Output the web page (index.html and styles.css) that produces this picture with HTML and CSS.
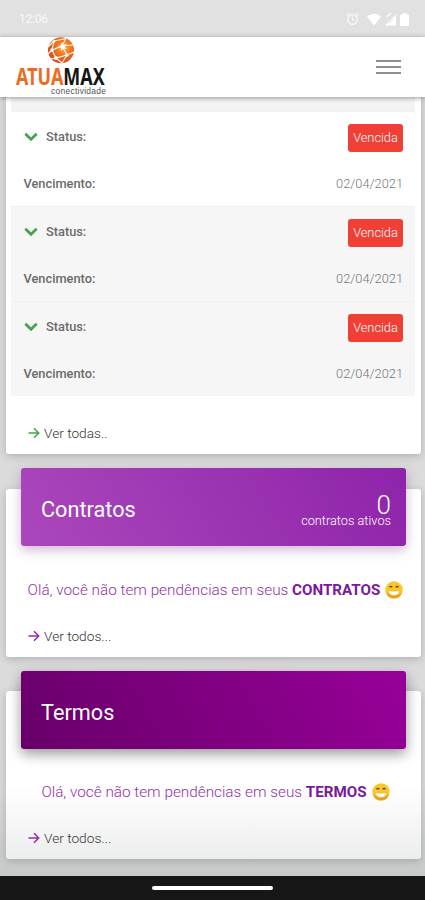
FILE: index.html
```html
<!DOCTYPE html>
<html lang="pt-BR">
<head>
  <meta charset="UTF-8">
  <meta name="viewport" content="width=device-width, initial-scale=1">
  <title>Atuamax</title>
  <link rel="stylesheet" href="styles.css">
</head>
<body>

<!-- shared icons -->
<svg class="sprite" width="0" height="0">
  <symbol id="chevron" viewBox="0 0 14 10">
    <path d="M1.3 1.8 L7 7.300 L12.7 1.8" fill="none" stroke="currentColor" stroke-width="2.8"/>
  </symbol>
  <symbol id="arrow" viewBox="0 0 12 12">
    <path d="M0.5 6 H10.5 M6 1.3 L10.7 6 L6 10.7" fill="none" stroke="currentColor" stroke-width="1.5"/>
  </symbol>
  <symbol id="grin" viewBox="0 0 18 18">
    <circle cx="9" cy="9" r="8.7" fill="#fbc62c"/>
    <path d="M1 12 a8.7 8.7 0 0 0 16 0 Q9 16.500 1 12z" fill="#eea01d"/>
    <path d="M4.500 6.300 Q5.900 4.600 7.300 6.300 M10.700 6.300 Q12.100 4.600 13.500 6.300" fill="none" stroke="#60451b" stroke-width="1.300"/>
    <path d="M3.500 9.500 Q9 11 14.500 9.500 Q14 14.500 9 14.500 Q4 14.500 3.500 9.500z" fill="#fffdf0" stroke="#e0a92c" stroke-width=".5"/>
  </symbol>
</svg>

<div class="statusbar">
  <span class="clock">12:06</span>
  <div class="status-icons">
    <svg width="13" height="14" viewBox="0 0 13 14">
      <circle cx="6.500" cy="7.500" r="4.800" fill="none" stroke="#f6f6f6" stroke-width="1.400"/>
      <path d="M0.500 3.500 L3.500 1 M12.500 3.500 L9.500 1 M6.500 4.500 V7.800 L8.800 9" fill="none" stroke="#f6f6f6" stroke-width="1.200"/>
    </svg>
    <svg class="wifi" width="14" height="13" viewBox="0 0 14 13">
      <path d="M0 3.500 Q7 -2 14 3.500 L7 12.500z" fill="#fff"/>
    </svg>
    <svg class="signal" width="12" height="14" viewBox="0 0 12 14">
      <path d="M0 13.500 L11 2.500 V13.500z" fill="#fff"/>
      <path d="M1.500 5 L6 1" stroke="#f4f4f4" stroke-width="2"/>
      <path d="M4 11.500 L8 7.500" stroke="#e1e1e1" stroke-width="1"/>
    </svg>
    <svg class="battery" width="9" height="13" viewBox="0 0 9 13">
      <path d="M2.500 0 H6.500 V1.500 H8 Q9 1.500 9 2.500 V12 Q9 13 8 13 H1 Q0 13 0 12 V2.500 Q0 1.500 1 1.500 H2.500z" fill="#fff"/>
    </svg>
  </div>
</div>

<header class="navbar">
  <div class="logo">
    <svg class="globe" width="28" height="27" viewBox="0 0 28 27">
      <defs>
        <radialGradient id="globe" cx=".6" cy=".4" r=".65">
          <stop offset="0" stop-color="#ffb23c"/>
          <stop offset=".45" stop-color="#f4731c"/>
          <stop offset="1" stop-color="#d9441b"/>
        </radialGradient>
      </defs>
      <circle cx="14" cy="13.300" r="13" fill="url(#globe)"/>
      <path d="M1 10 L7 4 L19 1.500 M7 4 L5 13 L15 9 L19 1.500 M5 13 L1 17 M5 13 L9 21 L20 18 L15 9 L26 8 M20 18 L27 15 M9 21 L15 26 L20 18 M9 21 L4 22" fill="none" stroke="#fff" stroke-width="1.100"/>
      <g fill="#fff">
        <path d="M15 5 L16.200 8 L20 6.500 L17.500 9.500 L20 12 L16.200 11.200 L14 14 L13.700 10.600 L10 10.500 L13.500 8.500z"/>
        <circle cx="5" cy="13" r="1.700"/>
        <circle cx="9" cy="21" r="1.900"/>
        <circle cx="20" cy="18" r="1.700"/>
        <circle cx="7" cy="4.500" r="1.300"/>
      </g>
    </svg>
    <div class="logo-name"><span>ATUA</span>MAX</div>
    <div class="logo-sub">conectividade</div>
  </div>
  <div class="menu">
    <span></span>
    <span></span>
    <span></span>
  </div>
</header>

<main>
  <section class="card invoices">
    <div class="row-end"></div>
    <div class="invoice">
      <div class="line">
        <div class="label"><svg class="chevron"><use href="#chevron"/></svg>Status:</div>
        <span class="badge">Vencida</span>
      </div>
      <div class="line">
        <div class="label">Vencimento:</div>
        <span class="date">02/04/2021</span>
      </div>
    </div>
    <div class="invoice shaded">
      <div class="line">
        <div class="label"><svg class="chevron"><use href="#chevron"/></svg>Status:</div>
        <span class="badge">Vencida</span>
      </div>
      <div class="line">
        <div class="label">Vencimento:</div>
        <span class="date">02/04/2021</span>
      </div>
    </div>
    <div class="invoice shaded">
      <div class="line">
        <div class="label"><svg class="chevron"><use href="#chevron"/></svg>Status:</div>
        <span class="badge">Vencida</span>
      </div>
      <div class="line">
        <div class="label">Vencimento:</div>
        <span class="date">02/04/2021</span>
      </div>
    </div>
    <div class="more green"><svg class="arrow"><use href="#arrow"/></svg>Ver todas..</div>
  </section>

  <section class="card">
    <div class="card-header contratos">
      <h2>Contratos</h2>
      <div class="total">
        <div class="number">0</div>
        <div class="caption">contratos ativos</div>
      </div>
    </div>
    <p class="message">Olá, você não tem pendências em seus <b>CONTRATOS</b><svg class="grin"><use href="#grin"/></svg></p>
    <div class="more"><svg class="arrow"><use href="#arrow"/></svg>Ver todos...</div>
  </section>

  <section class="card">
    <div class="card-header termos">
      <h2>Termos</h2>
    </div>
    <p class="message">Olá, você não tem pendências em seus <b>TERMOS</b><svg class="grin"><use href="#grin"/></svg></p>
    <div class="more"><svg class="arrow"><use href="#arrow"/></svg>Ver todos...</div>
  </section>
  <div class="fade"></div>
</main>

<div class="gesture-bar"><span></span></div>

</body>
</html>
```
FILE: styles.css
```css
* {
  box-sizing: border-box;
}
body {
  margin: 0;
  height: 900px;
  display: flex;
  flex-direction: column;
  overflow: hidden;
  font-family: Roboto, sans-serif;
  font-weight: 300;
  background: #dadbda;
}
svg {
  flex-shrink: 0;
}
.sprite {
  display: none;
}

/* system bar */
.statusbar {
  height: 37px;
  flex-shrink: 0;
  display: flex;
  align-items: center;
  justify-content: space-between;
  padding: 1px 16px 0 19px;
  background: #e1e1e1;
}
.clock {
  color: #f8f8f8;
  font-size: 12px;
  font-weight: 400;
  letter-spacing: -0.2px;
}
.status-icons {
  display: flex;
  align-items: center;
}
.wifi {
  margin-left: 8px;
}
.signal {
  margin-left: 4px;
}
.battery {
  margin-left: 3px;
}

/* navbar */
.navbar {
  position: relative;
  z-index: 2;
  height: 60px;
  flex-shrink: 0;
  display: flex;
  align-items: center;
  justify-content: space-between;
  padding: 0 24px 0 16px;
  background: #fff;
  box-shadow: 0 1px 5px rgba(0, 0, 0, 0.4);
}
.logo {
  width: 91px;
  height: 60px;
}
.globe {
  display: block;
  margin-left: 31px;
}
.logo-name {
  width: max-content;
  margin-top: 1px;
  font: bold 23px/22px "Noto Sans", sans-serif;
  color: #161616;
  transform: scaleX(0.78);
  transform-origin: left;
}
.logo-name span {
  color: #ee6a20;
}
.logo-sub {
  width: max-content;
  margin-left: 35px;
  font: 8.5px/8px "Liberation Sans", sans-serif;
  letter-spacing: 0.25px;
  color: #555;
}
.menu {
  width: 25px;
  display: grid;
  gap: 4px;
}
.menu span {
  height: 2px;
  background: #8e8e8e;
}

main {
  position: relative;
  height: 779px;
  flex-shrink: 0;
  padding: 0 4px 0 6px;
  overflow: hidden;
}
.card {
  height: 168px;
  margin-top: 34px;
  background: #fff;
  border-radius: 3px;
  box-shadow: 0 2px 8px rgba(0, 0, 0, 0.2);
}

/* invoices */
.invoices {
  height: 357px;
  margin: 0 0 35px;
  padding: 0 6px 0 5px;
  border-radius: 0 0 3px 3px;
}
.row-end {
  height: 14px;
  background: #f3f3f3;
}
.invoice {
  height: 95px;
  padding: 1px 12px 0 12.5px;
  border-top: 1px solid #f0f0f0;
}
.shaded {
  background: #f6f6f6;
}
.line {
  height: 47px;
  display: flex;
  align-items: center;
  justify-content: space-between;
}
.label {
  display: flex;
  align-items: center;
  color: #6b6b6b;
  font-size: 12.8px;
  font-weight: 500;
}
.chevron {
  width: 14px;
  height: 10px;
  margin-right: 8.5px;
  color: #43a450;
}
.badge {
  width: 55px;
  height: 28px;
  margin-top: 2px;
  line-height: 27px;
  text-align: center;
  color: #fff;
  background: #f23f36;
  border-radius: 3px;
  font-size: 12.8px;
}
.date {
  color: #777;
  font-size: 12.8px;
}
.more {
  display: flex;
  align-items: center;
  height: 20px;
  margin: 26px 0 0 22px;
  color: #333;
  font-size: 13.7px;
}
.more .arrow {
  width: 12px;
  height: 12px;
  margin-right: 4px;
  color: #9c27b0;
}
.more.green {
  margin: 27px 0 0 17px;
}
.green .arrow {
  color: #43a450;
}

/* contracts and terms */
.card-header {
  position: relative;
  top: -20px;
  height: 78px;
  margin: 0 15px;
  padding: 0 15px 0 20px;
  display: flex;
  align-items: center;
  justify-content: space-between;
  color: #fff;
  border-radius: 3px;
}
.contratos {
  top: -21px;
  background: linear-gradient(60deg, #ab47bc, #8e24aa);
  box-shadow: 0 4px 12px rgba(120, 50, 140, 0.35);
}
.termos {
  background: linear-gradient(60deg, #680069, #970098);
  box-shadow: 0 5px 13px rgba(0, 0, 0, 0.4);
}
.card-header h2 {
  margin: 0;
  padding-top: 4px;
  font-size: 21.7px;
  font-weight: 400;
}
.total {
  padding-top: 9px;
  text-align: right;
}
.number {
  font-size: 26px;
  line-height: 18px;
}
.caption {
  font-size: 12.75px;
  line-height: 13px;
}
.message {
  height: 20px;
  margin: 13px 0 0 4px;
  display: flex;
  align-items: center;
  justify-content: center;
  white-space: pre;
  color: #9330a8;
  font-size: 15.3px;
}
.message b {
  font-size: 15.2px;
  font-weight: 700;
  color: #7b189b;
}
.grin {
  width: 18px;
  height: 18px;
  margin-left: 5px;
}
.fade {
  position: absolute;
  left: 0;
  right: 0;
  bottom: 0;
  height: 90px;
  background: linear-gradient(rgba(90, 100, 95, 0), rgba(90, 100, 95, 0.14));
}

.gesture-bar {
  flex: 1;
  display: flex;
  justify-content: center;
  align-items: center;
  background: #171717;
}
.gesture-bar span {
  width: 121px;
  height: 4px;
  border-radius: 2px;
  background: #fff;
}
```
